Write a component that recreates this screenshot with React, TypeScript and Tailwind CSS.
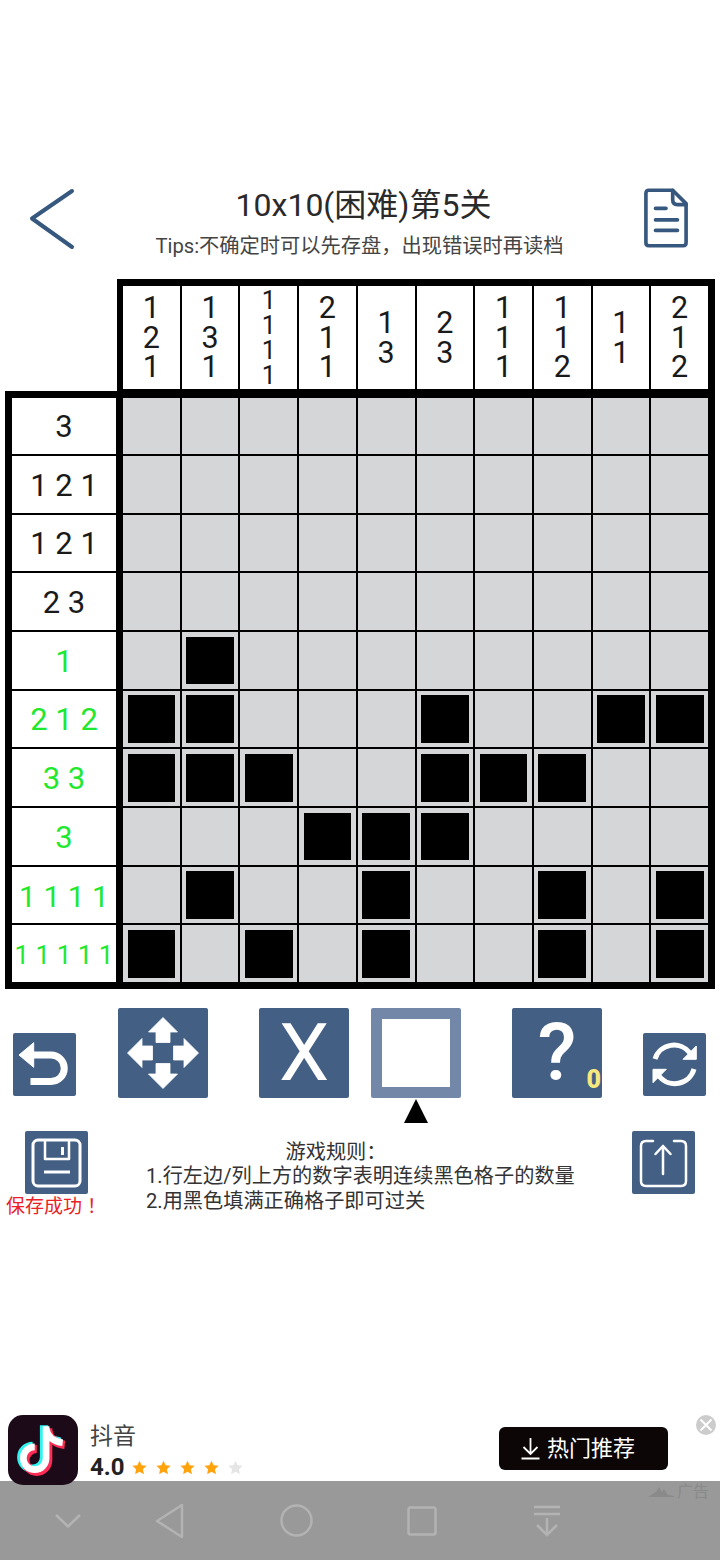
import React from "react";

const topClues = [["1","2","1"],["1","3","1"],["1","1","1","1"],["2","1","1"],["1","3"],["2","3"],["1","1","1"],["1","1","2"],["1","1"],["2","1","2"]];
const rowClues = ["3","1 2 1","1 2 1","2 3","1","2 1 2","3 3","3","1 1 1 1","1 1 1 1 1"];
const filled: number[][] = [[],[],[],[],[1],[0,1,5,8,9],[0,1,2,5,6,7],[3,4,5],[1,4,7,9],[0,2,4,7,9]];

function Tile({ size, children, className = "" }: { size: "lg" | "sm"; children: React.ReactNode; className?: string }) {
  return (
    <div className={`relative flex shrink-0 items-center justify-center rounded-[2px] bg-[#436084] ${size === "lg" ? "h-[90px] w-[90px]" : "h-[63px] w-[63px]"} ${className}`}>
      {children}
    </div>
  );
}

export default function App() {
  return (
    <div className="flex h-[1560px] w-[720px] flex-col overflow-hidden bg-white font-['Roboto','Noto_Sans_CJK_SC',sans-serif] text-black">
      {/* Header */}
      <header className="flex h-[279px] items-start pl-[29px] pt-[188px]">
        <svg width="46" height="62" viewBox="0 0 46 62" className="shrink-0" fill="none" stroke="#36587f" strokeWidth="4" strokeLinecap="round" strokeLinejoin="round">
          <path d="M43 3 L3 30.5 L43 59" />
        </svg>
        <div className="w-[569px] text-center">
          <div className="ml-[8px] text-[32px] leading-[34px] text-[#2a2a2a]">10x10(困难)第5关</div>
          <div className="mt-[10px] text-[20.25px] leading-[28px] text-[#444]">Tips:不确定时可以先存盘，出现错误时再读档</div>
        </div>
        <svg width="44" height="60" viewBox="0 0 46 62" className="shrink-0" fill="none" stroke="#37587e" strokeLinecap="round" strokeLinejoin="round" strokeWidth="3.8">
          <path d="M30 2 H5 Q2 2 2 5 V57 Q2 60 5 60 H41 Q44 60 44 57 V16 Z" />
          <path d="M30 2 V12 Q30 17 35 17 H44" />
          <path d="M12 21 H23 M12 33 H35 M12 44 H35" />
        </svg>
      </header>

      {/* Column clues */}
      <div className="ml-[117px] w-[598px] bg-black pb-[2px] pl-[6px] pr-[7px] pt-[7px]">
        <div className="grid h-[103px] grid-cols-10 gap-x-[2px]">
          {topClues.map((c, i) => (
            <div key={i} className={`flex flex-col items-center justify-center bg-white text-[#1a1a1a] ${c.length === 4 ? "text-[25px] leading-[25px]" : "text-[30.5px] leading-[29.5px]"}`}>
              {c.map((d, j) => <span key={j}>{d}</span>)}
            </div>
          ))}
        </div>
      </div>

      {/* Row clues and board */}
      <div className="ml-[5px] flex w-[710px] gap-x-[7px] bg-black pb-[6.5px] pl-[7px] pt-[6.5px]">
        <div className="grid h-[584.5px] w-[104px] grid-rows-10 gap-y-[2px]">
          {rowClues.map((c, i) => (
            <div key={i} className={`flex items-center justify-center whitespace-pre bg-white pt-[3px] ${i >= 4 ? "text-[#1fe82f]" : "text-[#1a1a1a]"} ${i === 9 ? "text-[26px]" : i === 8 ? "text-[30px]" : "text-[31px]"}`}>{c}</div>
          ))}
        </div>
        <div className="grid h-[584.5px] w-[585px] grid-cols-10 grid-rows-10 gap-[2px]">
          {filled.flatMap((row, r) =>
            Array.from({ length: 10 }, (_, c) => (
              <div key={`${r}-${c}`} className="bg-[#d5d6d8] p-[4.5px]">
                {row.includes(c) && <div className="h-full w-full bg-black" />}
              </div>
            ))
          )}
        </div>
      </div>

      {/* Toolbar */}
      <div className="mt-[19px] flex items-start pl-[13px]">
        <Tile size="sm" className="mt-[25px]">
          <svg width="63" height="63" viewBox="0 0 63 63" fill="none">
            <path d="M6 22 L20.7 9.7 V34.3 Z" fill="#fff" stroke="#fff" strokeLinejoin="round" strokeWidth="1" />
            <path d="M20 22 H38 A13.25 13.25 0 0 1 38 48.5 H17.5" stroke="#fff" strokeWidth="7" />
          </svg>
        </Tile>
        <Tile size="lg" className="ml-[42px]">
          <svg width="90" height="90" viewBox="0 0 90 90" fill="#fff" stroke="#fff" strokeWidth="0.8" strokeLinejoin="round">
            <path d="M45 9.5 L59.5 24 H52 V34.5 H38 V24 H30.5 Z" />
            <path d="M45 80.5 L59.5 66 H52 V55.5 H38 V66 H30.5 Z" />
            <path d="M9.5 45 L24 30.5 V38 H34.5 V52 H24 V59.5 Z" />
            <path d="M80.5 45 L66 30.5 V38 H55.5 V52 H66 V59.5 Z" />
          </svg>
        </Tile>
        <Tile size="lg" className="ml-[51px]">
          <span className="text-[80px] leading-none text-white">X</span>
        </Tile>
        <div className="ml-[22px] flex flex-col items-center">
          <div className="flex h-[90px] w-[90px] items-center justify-center rounded-[2px] bg-[#7388a8]">
            <div className="h-[68px] w-[68px] bg-white" />
          </div>
          <svg width="24" height="24" viewBox="0 0 24 24" className="mt-[1px]">
            <path d="M12 0 L24 24 H0 Z" fill="#000" />
          </svg>
        </div>
        <Tile size="lg" className="ml-[51px]">
          <span className="text-[80px] font-medium leading-none text-white">?</span>
          <span className="absolute bottom-[3px] right-[1px] text-[25px] font-black leading-[30px] text-[#f6e77f]">0</span>
        </Tile>
        <Tile size="sm" className="ml-[41px] mt-[25px]">
          <svg width="63" height="63" viewBox="0 0 63 63" fill="none">
            <path d="M12 26 A20 20 0 0 1 47 20" stroke="#fff" strokeWidth="5" />
            <path d="M53.3 13 V26.3 H40 Z" fill="#fff" stroke="#fff" strokeWidth="1" strokeLinejoin="round" />
            <path d="M51 36 A20 20 0 0 1 16 43" stroke="#fff" strokeWidth="5" />
            <path d="M10 49.7 V36.3 H23.3 Z" fill="#fff" stroke="#fff" strokeWidth="1" strokeLinejoin="round" />
          </svg>
        </Tile>
      </div>

      {/* Save, rules, load */}
      <div className="-mt-[1px] flex items-start pl-[6px]">
        <div className="flex w-[90px] shrink-0 flex-col items-start">
          <Tile size="sm" className="ml-[19px] mt-[9px]">
            <svg width="63" height="63" viewBox="0 0 63 63" fill="none" stroke="#fff" strokeLinejoin="round">
              <rect x="8" y="9" width="47" height="46" rx="5" strokeWidth="3" />
              <path d="M20 9 V28 H44 V9" strokeWidth="2.5" />
              <path d="M37.5 16 V24" strokeWidth="3" />
              <path d="M19 41 H45" strokeWidth="3" />
            </svg>
          </Tile>
          <span className="whitespace-nowrap text-[19px] leading-[26px] text-[#ea2227]">保存成功<span className="ml-[5px]">！</span></span>
        </div>
        <div className="ml-[50px] mt-[18px] w-[430px] shrink-0 text-[20.2px] leading-[24.5px] text-[#333]">
          <div className="pr-[50px] text-center">游戏规则：</div>
          <div className="whitespace-nowrap">1.行左边/列上方的数字表明连续黑色格子的数量</div>
          <div className="whitespace-nowrap">2.用黑色填满正确格子即可过关</div>
        </div>
        <Tile size="sm" className="ml-[56px] mt-[9px]">
          <svg width="63" height="63" viewBox="0 0 63 63" fill="none" stroke="#fff" strokeWidth="2.5" strokeLinecap="round" strokeLinejoin="round">
            <path d="M21 10 H14 Q9 10 9 15 V50 Q9 55 14 55 H49 Q54 55 54 50 V15 Q54 10 49 10 H42" />
            <path d="M31 43 V15 M23.5 23 L31 15 L38.5 23" />
          </svg>
        </Tile>
      </div>

      {/* Ad */}
      <div className="mt-auto flex h-[66px] items-start pl-[8px]">
        <div className="relative z-10 flex h-[70px] w-[70px] shrink-0 items-center justify-center rounded-[15px] bg-[#1c0a18]">
          <svg width="54" height="58" viewBox="0 0 52 56" fill="none" strokeWidth="8">
            <path d="M29 5 V36 A11 11 0 1 1 18 25 M29 7 C30 15 36 20 45 21" stroke="#2ff3ef" transform="translate(-2 -1)" />
            <path d="M29 5 V36 A11 11 0 1 1 18 25 M29 7 C30 15 36 20 45 21" stroke="#fe2c55" transform="translate(2 2)" />
            <path d="M29 5 V36 A11 11 0 1 1 18 25 M29 7 C30 15 36 20 45 21" stroke="#fff" strokeWidth="6.5" />
          </svg>
        </div>
        <div className="ml-[12px] mt-[7px] flex flex-col">
          <span className="text-[23px] leading-[30px] text-[#444]">抖音</span>
          <div className="flex items-center">
            <span className="w-[41.5px] text-[24px] font-bold leading-[30px] text-[#222]">4.0</span>
            <div className="flex gap-[9px]">
              {[0, 1, 2, 3, 4].map((s) => (
                <svg key={s} width="15" height="15" viewBox="0 0 24 24">
                  <path d="M12 1 L15.4 8.3 L23.4 9.3 L17.5 14.8 L19 22.8 L12 18.9 L5 22.8 L6.5 14.8 L0.6 9.3 L8.6 8.3 Z" fill={s < 4 ? "#ffa30f" : "#e5e5e5"} />
                </svg>
              ))}
            </div>
          </div>
        </div>
        <div className="ml-[256.5px] mt-[12px] flex h-[43px] w-[169px] shrink-0 items-center gap-[7px] rounded-[6px] bg-[#0c0606] pl-[22px] text-[22px] text-white">
          <svg width="19" height="23" viewBox="0 0 19 23" fill="none" stroke="#fff" strokeWidth="1.8">
            <path d="M9.5 1 V17 M2.5 10 L9.5 17 L16.5 10 M0.5 21.5 H18.5" />
          </svg>
          <span>热门推荐</span>
        </div>
        <div className="ml-[28px] flex h-[20px] w-[20px] shrink-0 items-center justify-center rounded-full bg-[#cccccc]">
          <svg width="14" height="14" viewBox="0 0 14 14" stroke="#fff" strokeWidth="2">
            <path d="M1.5 1.5 L12.5 12.5 M12.5 1.5 L1.5 12.5" />
          </svg>
        </div>
      </div>

      {/* Navigation bar */}
      <div className="relative flex h-[79px] items-center bg-[#999999] pl-[55px]">
        <svg width="26" height="16" viewBox="0 0 26 16" fill="none" stroke="#b3b3b3" strokeWidth="2.5" strokeLinejoin="round">
          <path d="M1 2 L13 13.5 L25 2" />
        </svg>
        <svg width="30" height="36" viewBox="0 0 30 36" fill="none" stroke="#b3b3b3" strokeWidth="2.5" strokeLinejoin="round" className="ml-[74px]">
          <path d="M27 2 V34 L2 18 Z" />
        </svg>
        <svg width="33" height="33" viewBox="0 0 34 34" fill="none" stroke="#b3b3b3" strokeWidth="2.5" className="ml-[95px]">
          <circle cx="17" cy="17" r="15.5" />
        </svg>
        <svg width="30" height="30" viewBox="0 0 30 30" fill="none" stroke="#b3b3b3" strokeWidth="2.5" className="ml-[94px]">
          <rect x="1.5" y="1.5" width="27" height="27" rx="2" />
        </svg>
        <svg width="30" height="32" viewBox="0 0 30 32" fill="none" stroke="#b3b3b3" strokeWidth="2.5" className="ml-[95px]">
          <path d="M2 2 H28 M2 9 H28 M15 13 V30 M5 20 L15 30 L25 20" />
        </svg>
        <div className="absolute right-[11px] top-[1px] flex items-center gap-[3px] text-[16px] leading-[20px] text-[#8a8a8a]">
          <svg width="26" height="10" viewBox="0 0 26 10" fill="#8a8a8a">
            <path d="M0 10 L8 5 L11 0 L14 5 L16 2 L20 8 L26 9 V10 Z" />
          </svg>
          <span>广告</span>
        </div>
      </div>
    </div>
  );
}
